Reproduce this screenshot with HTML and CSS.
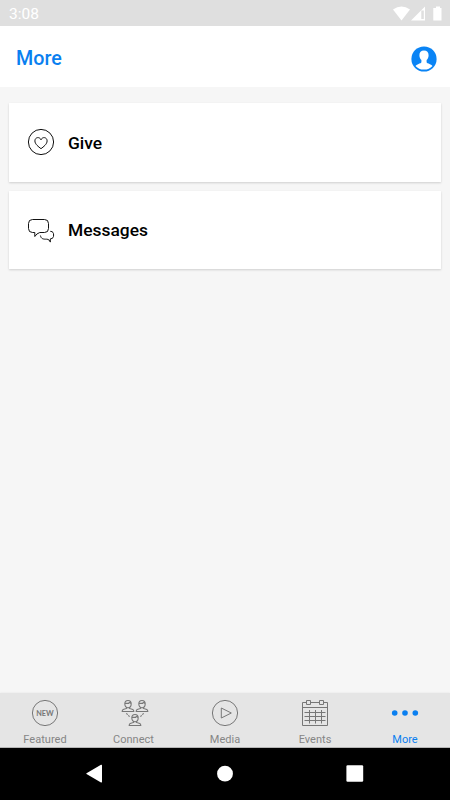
FILE: index.html
```html
<!DOCTYPE html>
<html lang="en">
<head>
<meta charset="utf-8">
<title>More</title>
<link rel="stylesheet" href="styles.css">
</head>
<body>
<div class="screen">
  <div class="status">
    <span class="clock">3:08</span>
    <svg class="status-icons" width="50" height="16" viewBox="0 0 50 16">
      <path d="M0 3.600Q8.500-2.600 17 3.600L8.500 14.500Z"/>
      <path fill-rule="evenodd" d="M32 .5V14.500H18ZM30.800 4.500H28.300V13H30.800Z"/>
      <path d="M43 .5h4V2h1.500v12.500h-8.200V2H43z"/>
    </svg>
  </div>
  <header class="header">
    <h1 class="title">More</h1>
    <svg class="avatar" width="26" height="26" viewBox="0 0 26 26">
      <circle cx="13" cy="13" r="12.600" fill="#0a84f5"/>
      <path fill="#fff" d="M13 4.600c3 0 4.600 1.900 4.600 4.600 0 2-.8 3.700-2 4.900v2c0 1 1.500 1.400 3.300 2.100 1.200.5 2.100 1 2.600 1.700A11 11 0 0 1 13 23.600 11 11 0 0 1 4.500 19.900c.5-.7 1.400-1.200 2.600-1.700 1.800-.7 3.300-1.100 3.300-2.100v-2c-1.200-1.200-2-2.900-2-4.900 0-2.700 1.600-4.600 4.600-4.600z"/>
    </svg>
  </header>
  <main class="content">
    <a class="card">
      <svg class="card-icon" width="28" height="28" viewBox="0 0 28 28">
        <circle cx="14" cy="14" r="12.600"/>
        <path d="M14 20.700C11.500 18.700 7.900 16.200 7.900 12.900c0-3.800 4.700-4.500 6.100-1.100 1.400-3.400 6.100-2.700 6.100 1.100 0 3.300-3.600 5.800-6.100 7.800z"/>
      </svg>
      <span>Give</span>
    </a>
    <a class="card">
      <svg class="card-icon" width="28" height="28" viewBox="0 0 28 28">
        <path d="M5.500 3.500h12q4 0 4 4v5q0 4-4 4h-4.700Q9.500 17.500 7.800 20.500V16.500H5.500q-4 0-4-4v-5q0-4 4-4z"/>
        <path d="M23.300 15.300c2.800.2 3.300 1.600 3.300 3.700 0 2.300-.5 3.500-3.300 3.900v3.200c-.5-1.700-1.800-2.900-3.700-2.900-3.400 0-5.400-.2-6.200-3.700"/>
      </svg>
      <span>Messages</span>
    </a>
  </main>
  <nav class="tabs">
    <a class="tab">
      <svg width="28" height="28" viewBox="0 0 28 28">
        <circle cx="14" cy="14" r="12.600"/>
        <text class="new" x="14" y="16.500" text-anchor="middle" textLength="17.500" lengthAdjust="spacingAndGlyphs">NEW</text>
      </svg>
      <span>Featured</span>
    </a>
    <a class="tab connect">
      <svg width="28" height="28" viewBox="0 0 28 28">
        <defs>
          <g id="person">
            <path d="M3.200 4.300C3.200 2 4.400 1 6.400 1s3.200 1 3.200 3.300c0 2.200-1.200 4-3.200 4s-3.200-1.800-3.200-4zM3.300 3.900H7L7.700 3l1.800.9M4.900 7.900v1L1.600 10Q.6 10.500.6 12h11.600q0-1.500-1-2L7.900 8.900v-1"/>
          </g>
        </defs>
        <use href="#person" x=".6" y=".5"/>
        <use href="#person" x="14.600" y=".5"/>
        <use href="#person" x="7.600" y="14.500"/>
        <path d="M5.300 14.300l3.300 3.300M22.700 14.300l-3.300 3.300" stroke-dasharray="2 .8"/>
      </svg>
      <span>Connect</span>
    </a>
    <a class="tab">
      <svg width="28" height="28" viewBox="0 0 28 28">
        <circle cx="14" cy="14" r="12.600"/>
        <path d="M10.300 9v10l10-5z"/>
      </svg>
      <span>Media</span>
    </a>
    <a class="tab calendar">
      <svg width="28" height="28" viewBox="0 0 28 28">
        <path d="M5.500 3.500h-4v23h25v-23h-4M9.500 3.500h9M1.500 8.500h25M5.500 1.500h4v4h-4zM18.500 1.500h4v4h-4zM8.500 11v13.500M14.500 11v13.500M20.500 11v13.500M3.500 13.500h21M3.500 17.500h21M3.500 21.500h21"/>
      </svg>
      <span>Events</span>
    </a>
    <a class="tab active">
      <svg width="28" height="28" viewBox="0 0 28 28">
        <circle cx="3.700" cy="14" r="2.800"/><circle cx="14" cy="14" r="2.800"/><circle cx="24.300" cy="14" r="2.800"/>
      </svg>
      <span>More</span>
    </a>
  </nav>
  <div class="system">
    <svg width="18" height="20" viewBox="0 0 18 20"><path d="M1.500 9.300L16 .8q1-.4 1 .6v16.400q0 1-1 .6L1.500 9.900q-.5-.3 0-.6z"/></svg>
    <svg width="18" height="20" viewBox="0 0 18 20"><circle cx="9" cy="9.700" r="7.900"/></svg>
    <svg width="18" height="20" viewBox="0 0 18 20"><rect x=".4" y="1.200" width="16.800" height="16.600" rx="1.200"/></svg>
  </div>
</div>
</body>
</html>
```
FILE: styles.css
```css
* { box-sizing: border-box; }
body { margin: 0; font-family: Roboto, "Liberation Sans", sans-serif; }
.screen {
  width: 450px;
  height: 800px;
  display: flex;
  flex-direction: column;
  background: #f6f6f6;
}
.status {
  height: 26px;
  padding: 1px 7px 0 9px;
  display: flex;
  align-items: center;
  justify-content: space-between;
  background: #dfdfdf;
  color: #fff;
}
.clock { font-size: 15.500px; line-height: 26px; }
.status-icons { fill: #fff; }
.header {
  height: 61px;
  padding: 4px 13px 0 16px;
  display: flex;
  align-items: center;
  justify-content: space-between;
  background: #fff;
}
.title { margin: 0; color: #0a7ff0; font-size: 19.700px; font-weight: 500; }
.content {
  flex: 1;
  padding: 16px 9px 0;
  display: flex;
  flex-direction: column;
  gap: 9px;
}
.card {
  height: 78.500px;
  padding: 1px 18px 0;
  display: flex;
  align-items: center;
  gap: 13px;
  background: #fff;
  box-shadow: 0 .5px 2px rgba(0, 0, 0, .16);
  color: #000;
  font-size: 17.400px;
  font-weight: 500;
}
.card-icon { fill: none; stroke: #111; stroke-width: 1; margin-top: -1px; }
.tabs {
  height: 55px;
  display: flex;
  background: #e5e5e5;
  border-bottom: 1px solid #b5b5b5;
  box-shadow: 0 0 2px rgba(0, 0, 0, .08);
}
.tab {
  flex: 1;
  padding-top: 6px;
  display: flex;
  flex-direction: column;
  align-items: center;
  color: #858585;
  font-size: 11px;
  line-height: 14px;
  letter-spacing: .02px;
}
.tab svg { fill: none; stroke: #777; stroke-width: 1; margin-bottom: 6px; }
.tab.connect span { margin-right: 3px; }
.tab.connect svg { stroke-width: 1.100; }
.tab .new { fill: #777; stroke: none; font: 700 7.500px Lato, sans-serif; letter-spacing: 0; }
.tab.active { color: #0a7ff0; }
.tab.active svg { fill: #0a7ff0; stroke: none; }
.system {
  height: 52px;
  padding: 0 86px 0 85px;
  display: flex;
  align-items: center;
  justify-content: space-between;
  background: #000;
}
.system svg { fill: #fff; }
```
